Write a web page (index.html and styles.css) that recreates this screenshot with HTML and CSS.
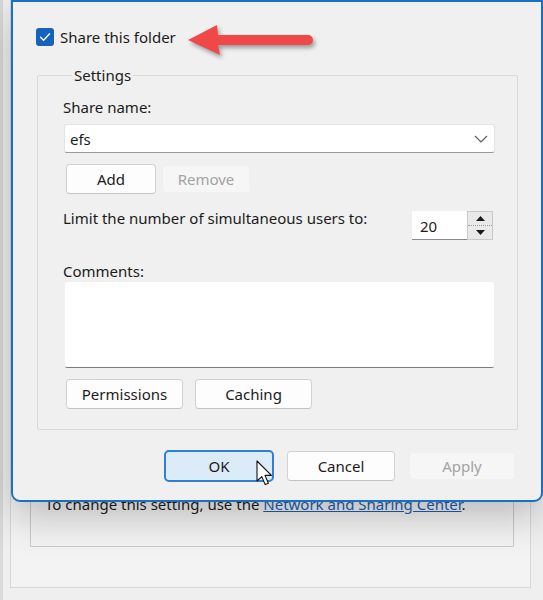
FILE: index.html
```html
<!DOCTYPE html>
<html>
<head>
<meta charset="utf-8">
<link rel="stylesheet" href="styles.css">
</head>
<body>
<div class="desk">
  <div class="bgwin">
    <div class="bggroup">
      <p class="bgtext">To change this setting, use the <a href="#">Network and Sharing Center</a>.</p>
    </div>
  </div>

  <div class="dialog">
    <label class="share">
      <span class="cb"><svg width="18" height="18" viewBox="0 0 18 18"><polyline points="4.5,9.2 7.6,12.2 13.6,5.8" fill="none" stroke="#fff" stroke-width="1.3" stroke-linecap="round" stroke-linejoin="round"/></svg></span>
      <span>Share this folder</span>
    </label>

    <fieldset class="settings">
      <legend>Settings</legend>
      <div class="lbl">Share name:</div>
      <div class="combo">
        <span>efs</span>
        <svg class="chev" width="14" height="8" viewBox="0 0 14 8"><polyline points="1,1 7,7 13,1" fill="none" stroke="#5a5a5a" stroke-width="1.1"/></svg>
      </div>
      <div class="btnrow first">
        <button class="btn add">Add</button>
        <button class="btn dis remove">Remove</button>
      </div>
      <div class="limit">
        <span class="limtext">Limit the number of simultaneous users to:</span>
        <div class="spin">
          <span class="num">20</span>
          <span class="arrows">
            <span class="half"><svg width="9" height="5" viewBox="0 0 9 5"><polygon points="0,5 4.5,0 9,5" fill="#1a1a1a"/></svg></span>
            <span class="half lower"><svg width="9" height="5" viewBox="0 0 9 5"><polygon points="0,0 4.5,5 9,0" fill="#1a1a1a"/></svg></span>
          </span>
        </div>
      </div>
      <div class="lbl comments">Comments:</div>
      <div class="textarea"></div>
      <div class="btnrow second">
        <button class="btn perm">Permissions</button>
        <button class="btn cach">Caching</button>
      </div>
    </fieldset>

    <div class="actions">
      <button class="btn ok">OK</button>
      <button class="btn cancel">Cancel</button>
      <button class="btn dis apply">Apply</button>
    </div>
  </div>

  <svg class="arrow" width="145" height="45" viewBox="0 0 145 45">
    <path d="M8 22 L37 7 L38 17 L128 17 A5 5 0 0 1 128 27 L38 27 L40 37 Z" fill="#f04848"/>
  </svg>

  <svg class="cursor" width="20" height="28" viewBox="0 0 20 28">
    <path d="M1 1 L1 21 L5.8 16.6 L9.2 24.6 L12.4 23.2 L9 15.4 L15.4 15.4 Z" fill="#fff" stroke="#111" stroke-width="1.1" stroke-linejoin="round"/>
  </svg>
</div>
</body>
</html>
```

FILE: styles.css
```css
* { box-sizing: border-box; }
html, body { margin: 0; padding: 0; }
body {
  background: #ececec;
  font-family: "Noto Sans", "Open Sans", sans-serif;
  font-size: 15px;
  color: #1b1b1b;
}
.desk {
  position: relative;
  width: 543px;
  height: 600px;
  overflow: hidden;
  background: linear-gradient(to right, #d9d9d9 0, #d9d9d9 3px, #efefef 3px);
}

/* background window */
.bgwin {
  position: absolute;
  left: 10px;
  top: 0;
  width: 521px;
  height: 588px;
  border: 1px solid #d6d6d6;
  border-top: none;
  background: #f3f3f3;
  padding-left: 19px;
}
.bggroup {
  width: 484px;
  height: 547px;
  border: 1px solid #cbcbcb;
  border-top: none;
  display: flex;
  flex-direction: column;
  justify-content: flex-end;
  padding: 0 0 32px 14px;
}
.bgtext {
  margin: 0;
  line-height: 20px;
  font-size: 15px;
  color: #1b1b1b;
}
.bgtext a { color: #1a5fb4; text-decoration: underline; }

/* dialog */
.dialog {
  position: absolute;
  left: 11px;
  top: 0;
  width: 532px;
  height: 502px;
  background: #f0f0f0;
  border: 2px solid #1b70c6;
  border-radius: 0 0 9px 9px;
  box-shadow: 0 14px 40px rgba(0,0,0,0.24);
  padding: 25px 23px 0 23px;
}
.share {
  display: flex;
  align-items: center;
  height: 19px;
  gap: 6px;
  font-size: 15px;
}
.cb {
  width: 18px;
  height: 18px;
  border-radius: 3px;
  background: #1563bd;
  display: block;
}
.cb svg { display: block; }

.settings {
  margin: 19px 0 0 1px;
  width: 481px;
  border: 1px solid #d9d9d9;
  border-radius: 2px;
  padding: 12px 22px 20px 25px;
}
.settings legend {
  padding: 0 2px;
  margin-left: 9px;
  line-height: 20px;
  font-size: 15px;
}
.lbl {
  line-height: 20px;
}
.combo {
  margin: 7px 0 0 1px;
  height: 29px;
  background: #fff;
  border: 1px solid #e3e3e3;
  border-bottom-color: #9a9a9a;
  border-radius: 3px;
  display: flex;
  align-items: center;
  justify-content: space-between;
  padding: 0 6px 0 5px;
  font-size: 15px;
}
.chev { display: block; margin-top: 1px; }

.btnrow {
  display: flex;
  align-items: center;
}
.btnrow.first { margin: 11px 0 0 3px; gap: 6px; }
.btnrow.second { margin: 11px 0 0 3px; gap: 12px; }

.btn {
  font-family: inherit;
  font-size: 15px;
  color: #1b1b1b;
  background: #fdfdfd;
  border: 1px solid #d2d2d2;
  border-bottom-color: #c2c2c2;
  border-radius: 4px;
  padding: 0;
  height: 30px;
  line-height: 26px;
}
.btn.dis {
  background: #f6f6f6;
  border-color: #f0f0f0;
  color: #a3a3a3;
}
.add { width: 90px; height: 30px; }
.remove { width: 88px; height: 28px; }
.perm { width: 117px; }
.cach { width: 117px; }

.limit {
  display: flex;
  align-items: flex-start;
  margin-top: 14px;
}
.limtext { line-height: 20px; }
.spin {
  margin: 3px 2px 0 auto;
  display: flex;
  height: 29px;
}
.num {
  width: 55px;
  height: 29px;
  background: #fff;
  border-bottom: 1px solid #8a8a8a;
  padding-left: 8px;
  line-height: 30px;
  font-size: 15px;
}
.arrows {
  width: 26px;
  height: 29px;
  display: flex;
  flex-direction: column;
  border: 1px solid #c9c9c9;
  background: #e9e9e9;
}
.half {
  flex: 1;
  display: flex;
  align-items: center;
  justify-content: center;
}
.half svg { display: block; }
.half.lower { border-top: 1px dotted #9c9c9c; }

.lbl.comments { margin-top: 21px; }
.textarea {
  margin: 1px 1px 0 2px;
  height: 86px;
  background: #fff;
  border-bottom: 1px solid #7c7c7c;
  border-radius: 2px;
}

.actions {
  display: flex;
  justify-content: flex-end;
  align-items: center;
  margin: 20px 3px 0 0;
}
.ok {
  width: 110px;
  height: 32px;
  background: #dcebf8;
  border: 2px solid #2f80d2;
  border-radius: 5px;
  margin-right: 13px;
}
.cancel { width: 108px; margin-right: 14px; }
.apply { width: 106px; height: 28px; }

/* overlays */
.arrow {
  position: absolute;
  left: 180px;
  top: 18px;
  filter: drop-shadow(2px 3px 2px rgba(0,0,0,0.35));
}
.cursor {
  position: absolute;
  left: 256px;
  top: 460px;
}
```
